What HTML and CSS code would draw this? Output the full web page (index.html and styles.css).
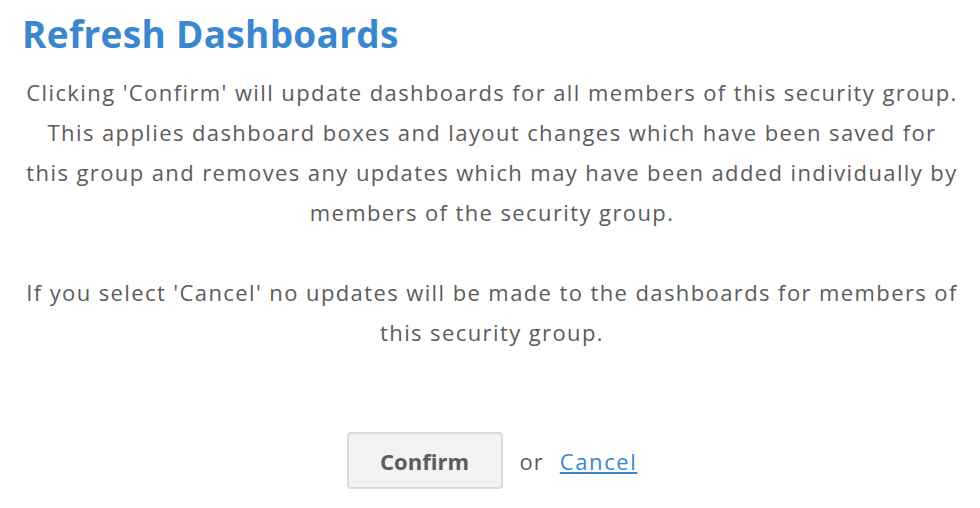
FILE: index.html
```html
<!DOCTYPE html>
<html>
<head>
<meta charset="utf-8">
<link rel="stylesheet" href="styles.css">
</head>
<body>
<div class="dialog">
  <h1 class="title">Refresh Dashboards</h1>
  <div class="message">
    <p>Clicking 'Confirm' will update dashboards for all members of this security group.<br>This applies dashboard boxes and layout changes which have been saved for<br>this group and removes any updates which may have been added individually by<br>members of the security group.</p>
    <p>If you select 'Cancel' no updates will be made to the dashboards for members of<br>this security group.</p>
  </div>
  <div class="actions">
    <button class="btn">Confirm</button>
    <span class="or">or</span>
    <a class="cancel" href="#">Cancel</a>
  </div>
</div>
</body>
</html>
```

FILE: styles.css
```css
html, body {
  margin: 0;
  padding: 0;
  background: #ffffff;
}
body {
  font-family: "Open Sans", "Noto Sans", sans-serif;
  color: #5c5c5c;
}
.dialog {
  width: 944px;
  padding: 0 16px 0 20px;
}
.title {
  margin: 0 0 0 2px;
  padding-top: 12px;
  font-size: 37px;
  line-height: 44px;
  font-weight: 700;
  letter-spacing: 0.3px;
  color: #3a87cd;
}
.message {
  margin-top: 16px;
  text-align: center;
  font-size: 22px;
  line-height: 40px;
  letter-spacing: 1.4px;
}
.message p {
  margin: 0 0 40px 0;
}
.message p:last-child {
  margin-bottom: 0;
}
.actions {
  display: flex;
  justify-content: center;
  align-items: center;
  margin-top: 80px;
}
.btn {
  width: 156px;
  height: 57px;
  border: 2px solid #dadada;
  border-radius: 4px;
  background: #f2f2f2;
  font-family: inherit;
  font-size: 22px;
  font-weight: 700;
  color: #5c5c5c;
}
.or {
  font-size: 22px;
  letter-spacing: 1px;
  margin: 0 16px 0 17px;
}
.cancel {
  font-size: 22px;
  letter-spacing: 1.6px;
  color: #3a87cd;
  text-decoration: underline;
}
```
